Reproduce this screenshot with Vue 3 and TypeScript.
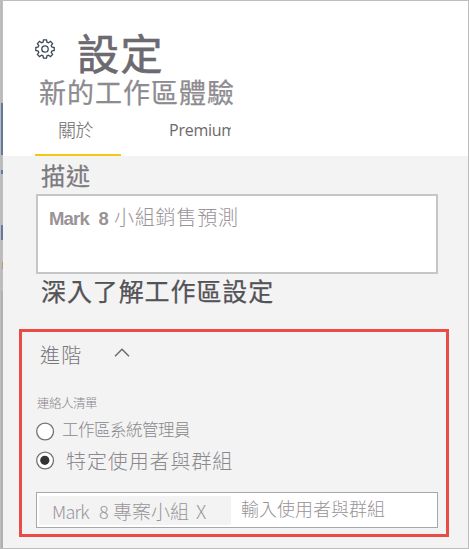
<script setup lang="ts">
import { ref } from 'vue'

interface ContactOption {
  id: string
  label: string
}

const tabs = ['關於', 'Premium']
const activeTab = ref(0)
const options: ContactOption[] = [
  { id: 'admins', label: '工作區系統管理員' },
  { id: 'specific', label: '特定使用者與群組' },
]
const selected = ref('specific')
</script>

<template>
  <div class="screen">
    <div class="backdrop">
      <i class="mark blue tall"></i>
      <i class="mark blue dot"></i>
      <i class="mark blue short"></i>
      <i class="mark amber"></i>
      <i class="mark shade"></i>
    </div>
    <main class="panel">
      <header class="head">
        <div class="title-row">
          <svg class="gear" viewBox="0 0 20 20" width="20" height="20">
            <path d="M8.5 .8h3l.5 2.4 1.4.6 2.1-1.4 2.1 2.1-1.4 2.1.6 1.4 2.4.5v3l-2.4.5-.6 1.4 1.4 2.1-2.1 2.1-2.1-1.4-1.4.6-.5 2.4h-3L8 16.8l-1.4-.6-2.1 1.4-2.1-2.1 1.4-2.1L3.2 12 .8 11.5v-3L3.2 8l.6-1.4-1.4-2.1 2.1-2.1 2.1 1.4L8 3.2z" />
            <circle cx="10" cy="10" r="3.2" />
          </svg>
          <h1>設定</h1>
        </div>
        <h2>新的工作區體驗</h2>
        <nav class="tabs">
          <button
            v-for="(tab, i) in tabs"
            :key="tab"
            :class="['tab', { active: i === activeTab, latin: i === 1 }]"
            @click="activeTab = i"
          ><span>{{ tab }}</span></button>
        </nav>
      </header>
      <section class="body">
        <h3 class="desc-title">描述</h3>
        <div class="desc-box"><b>Mark 8</b><span>小組銷售預測</span></div>
        <h3 class="learn">深入了解工作區設定</h3>
        <div class="advanced">
          <div class="adv-head">
            <span>進階</span>
            <svg width="16" height="10" viewBox="0 0 16 10"><path d="M1 8.3 8 1.3l7 7" /></svg>
          </div>
          <div class="list-label">連絡人清單</div>
          <div
            v-for="o in options"
            :key="o.id"
            :class="['option', o.id]"
            @click="selected = o.id"
          >
            <svg width="19" height="19" viewBox="0 0 19 19">
              <circle class="ring" cx="9.1" cy="9.5" r="8.4" />
              <circle v-if="selected === o.id" class="fill" cx="8.8" cy="9.3" r="4.6" />
            </svg>
            <span>{{ o.label }}</span>
          </div>
          <div class="people">
            <div class="chip"><span class="mk">Mark</span><span class="num">8</span><span class="team">專案小組</span><span class="x">X</span></div>
            <span class="hint">輸入使用者與群組</span>
          </div>
        </div>
      </section>
    </main>
  </div>
</template>

<style>
body {
  overflow: hidden;
}
</style>

<style scoped>
* {
  box-sizing: border-box;
}
.screen {
  width: 469px;
  height: 549px;
  display: flex;
  border: solid #bdbdbd;
  border-width: 1px 1px 1px 0;
  background: #fff;
  font-family: "Liberation Sans", "Noto Sans CJK TC", sans-serif;
  white-space: nowrap;
}
.backdrop {
  position: relative;
  flex: 0 0 3px;
  background: linear-gradient(90deg, #bdbdbd 1px, #b6b6b6 1px, #c2c2c2);
}
.mark {
  position: absolute;
  left: 1px;
  width: 2px;
}
.blue {
  background: #64799f;
}
.tall {
  top: 102px;
  height: 52px;
}
.dot {
  top: 169px;
  height: 4px;
}
.short {
  top: 224px;
  height: 15px;
}
.amber {
  left: 2px;
  top: 261px;
  width: 1px;
  height: 7px;
  background: #bd9a68;
}
.shade {
  top: 290px;
  height: 257px;
  background: #b1b1b1;
}
.panel {
  flex: 1;
  display: flex;
  flex-direction: column;
}
.head {
  height: 155px;
  flex: none;
  background: #fff;
}
h1, h2, h3 {
  margin: 0;
  font-weight: 400;
  -webkit-text-stroke: 0.25px currentColor;
}
.title-row {
  display: flex;
  height: 78px;
  padding-left: 32px;
}
.gear {
  margin-top: 38px;
  fill: none;
  stroke: #3f4a58;
  stroke-width: 1.3;
}
h1 {
  margin: 29px 0 0 22px;
  font-size: 42px;
  line-height: 51px;
  letter-spacing: 1.5px;
  color: #6c6a6f;
  -webkit-text-stroke-width: 0.7px;
}
h2 {
  height: 30px;
  padding-left: 36px;
  font-size: 27px;
  line-height: 30px;
  letter-spacing: 1px;
  color: #8d8b90;
}
.tabs {
  display: flex;
  height: 47px;
  padding-left: 32px;
}
.tab {
  display: flex;
  align-items: flex-start;
  width: 86px;
  height: 47px;
  padding: 0 0 0 23px;
  border: 0;
  background: none;
  font: 300 18px/41px "Noto Sans CJK TC", sans-serif;
  letter-spacing: -0.5px;
  color: #6b696b;
}
.tab.active {
  border-bottom: 2px solid #f2c811;
}
.tab.latin {
  margin-left: 48px;
  width: 62px;
  padding-left: 0;
  overflow: hidden;
  font: 400 16px/43px "Open Sans", sans-serif;
  letter-spacing: -0.25px;
}
.body {
  flex: 1;
  background: #f3f3f3;
  padding-left: 16px;
}
.desc-title {
  height: 38px;
  padding-left: 22px;
  font-size: 24px;
  line-height: 41px;
  letter-spacing: 1px;
  color: #7c7a7e;
}
.desc-box {
  width: 402px;
  height: 80px;
  margin-left: 17px;
  padding: 9px 11px;
  display: flex;
  border: 2px solid #c6c6c6;
  background: #fff;
  color: #999397;
  font-size: 20px;
  line-height: 26px;
}
.desc-box b {
  width: 65px;
  font-size: 18.5px;
  line-height: 27px;
  letter-spacing: -0.8px;
  word-spacing: 5.2px;
}
.desc-box span {
  font-weight: 300;
  letter-spacing: 0.8px;
}
.learn {
  height: 36px;
  padding-left: 22px;
  font-size: 25px;
  line-height: 37px;
  letter-spacing: 0.9px;
  color: #535256;
}
.advanced {
  width: 430px;
  height: 208px;
  margin-top: 19px;
  border: 3px solid #eb4b46;
  padding-left: 14px;
  font-weight: 300;
  color: #8a888c;
}
.adv-head {
  display: flex;
  align-items: flex-start;
  height: 63px;
  padding: 8px 0 0 4px;
  font-size: 20px;
  line-height: 32px;
  letter-spacing: 1.3px;
  color: #79777b;
}
.adv-head span {
  width: 74px;
}
.adv-head svg {
  margin-top: 8px;
  fill: none;
  stroke: #6f6a6c;
  stroke-width: 1.5;
}
.list-label {
  height: 22px;
  padding-left: 1px;
  font-size: 12.5px;
  line-height: 19px;
  letter-spacing: -0.5px;
}
.option {
  display: flex;
  align-items: center;
  height: 29px;
}
.option .ring {
  fill: #fff;
  stroke: #737373;
  stroke-width: 1.3;
}
.option .fill {
  fill: #333;
}
.option.admins span {
  margin: -5px 0 0 7px;
  font-size: 16.5px;
  letter-spacing: -0.5px;
}
.option.specific span {
  margin-left: 11px;
  font-size: 20px;
  letter-spacing: 0.9px;
}
.people {
  display: flex;
  width: 402px;
  height: 36px;
  margin-top: 17px;
  padding: 3px 2px;
  border: 1px solid #a7a7a7;
  background: #fff;
}
.chip {
  display: flex;
  width: 192px;
  height: 29px;
  padding-left: 13px;
  background: #f3f3f3;
  font-size: 18px;
  line-height: 30px;
  color: #98959a;
}
.chip .mk, .chip .num, .chip .x {
  font-family: "Noto Sans CJK TC", sans-serif;
}
.chip .mk {
  width: 47px;
  letter-spacing: -0.7px;
}
.chip .num {
  width: 14px;
}
.chip .team {
  width: 83px;
  font-size: 19px;
  line-height: 33px;
}
.chip .x {
  font-size: 19px;
}
.hint {
  margin-left: 10px;
  font-size: 18px;
  line-height: 29px;
  color: #999397;
}
</style>
